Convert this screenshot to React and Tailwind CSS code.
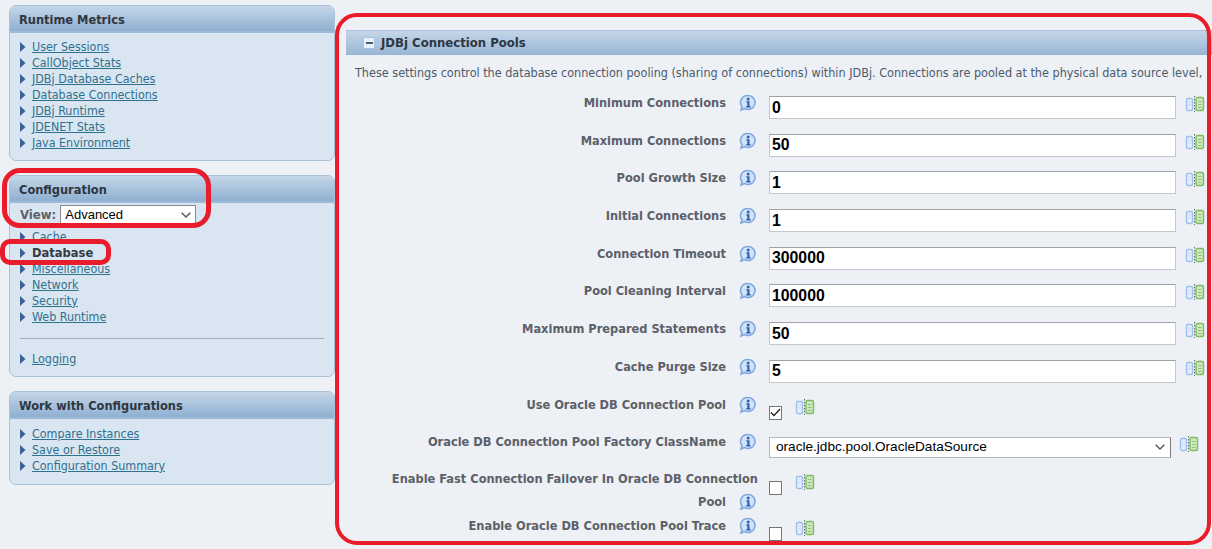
import React from 'react';

const font = { fontFamily: '"DejaVu Sans Condensed", Tahoma, "DejaVu Sans", sans-serif' };
const arial = { fontFamily: '"Liberation Sans", Arial, sans-serif' };

const InfoIcon = () => (
  <svg width="18" height="18" viewBox="0 0 18 18" className="inline-block align-middle ml-[13px] mr-[1px]">
    <path d="M9 1.5a7 7 0 1 1-3.6 13l-3.4 1.6 1-3.4A7 7 0 0 1 9 1.5z" fill="#d3e3f7" stroke="#7fa8e0" strokeWidth="1.6" />
    <circle cx="9.2" cy="5" r="1.5" fill="#2f62ad" />
    <path d="M7.2 7.3h3.3v4.8h1.1v1.3H7.2v-1.3h1.1V8.6H7.2z" fill="#2f62ad" />
  </svg>
);

const MultiIcon = () => (
  <svg width="20" height="18" viewBox="0 0 20 18" className="shrink-0">
    <rect x="1.5" y="3.5" width="6" height="12" rx="1.5" fill="#e4effb" stroke="#9dc0ea" strokeWidth="1.4" />
    <path d="M3 7h3M3 10h3" stroke="#c3d8f2" />
    <path d="M9.5 1v16" stroke="#666" strokeDasharray="1.5 1.5" />
    <rect x="11" y="2.5" width="7.5" height="13" rx="1.5" fill="#cfe8bf" stroke="#7dbb63" strokeWidth="1.4" />
    <path d="M13 6.5h3.5M13 9.5h3.5M13 12.5h3.5" stroke="#8cc474" />
  </svg>
);

const SelectBox = ({ value, className }) => (
  <div role="combobox" className={`flex items-center justify-between bg-white text-black ${className}`} style={arial}>
    <span>{value}</span>
    <svg width="10" height="6" viewBox="0 0 10 6" className="shrink-0">
      <path d="M.7.8L5 5l4.3-4.2" fill="none" stroke="#555" strokeWidth="1.4" />
    </svg>
  </div>
);

const NavItem = ({ label, active }) => (
  <li className="flex items-center h-4">
    <svg width="6" height="10" viewBox="0 0 6 10" className="ml-[10px] mr-[6px] mt-[-1px] shrink-0">
      <path d="M0 0l5.5 5L0 10z" fill="#3d6096" />
    </svg>
    {active ? (
      <span className="font-bold text-[12.8px] text-[#333a44]">{label}</span>
    ) : (
      <a href="#" className="text-[12.4px] text-[#2f7191] underline">{label}</a>
    )}
  </li>
);

const Panel = ({ title, className, children }) => (
  <section className={`rounded-[7px] border border-[#a9c1d9] bg-[#d9e5f0] overflow-hidden ${className}`}>
    <h2 className="h-[27px] flex items-center px-[9px] pt-[3px] text-[12.7px] font-bold text-[#2f3640] bg-gradient-to-b from-[#c5d6e8] to-[#8fb0d1] border-b-2 border-[#9dbbd9]">
      {title}
    </h2>
    {children}
  </section>
);

const inputRows = [
  ['Minimum Connections', '0'],
  ['Maximum Connections', '50'],
  ['Pool Growth Size', '1'],
  ['Initial Connections', '1'],
  ['Connection Timeout', '300000'],
  ['Pool Cleaning Interval', '100000'],
  ['Maximum Prepared Statements', '50'],
  ['Cache Purge Size', '5'],
];

const Label = ({ children, className = '' }) => (
  <div className={`w-[412px] shrink-0 text-right text-[12.7px] font-bold text-[#5c6068] pl-[30px] ${className}`}>
    {children}
    <InfoIcon />
  </div>
);

const CheckRow = ({ label, checked, rowClass, labelClass, boxClass }) => (
  <div className={`flex ${rowClass}`}>
    <Label className={labelClass}>{label}</Label>
    <div className={`ml-[11px] w-[13px] h-[14px] border border-[#767676] bg-white flex items-center justify-center ${boxClass}`}>
      {checked && (
        <svg width="11" height="9" viewBox="0 0 11 9">
          <path d="M1 4.5l3 3 6-6.5" fill="none" stroke="#222" strokeWidth="1.3" />
        </svg>
      )}
    </div>
    <div className="ml-[13px] mt-[8px]"><MultiIcon /></div>
  </div>
);

export default function App() {
  return (
    <div className="relative w-[1212px] h-[549px] overflow-hidden bg-[#edf1f6] flex" style={font}>
      <aside className="w-[326px] ml-[9px] pt-[5px] shrink-0 flex flex-col gap-[14px]">
        <Panel title="Runtime Metrics" className="h-[156px]">
          <ul className="pt-[6px]">
            {['User Sessions', 'CallObject Stats', 'JDBj Database Caches', 'Database Connections', 'JDBj Runtime', 'JDENET Stats', 'Java Environment'].map(item => (
              <NavItem key={item} label={item} />
            ))}
          </ul>
        </Panel>

        <Panel title="Configuration" className="h-[202px]">
          <div className="flex items-center h-[24px] pl-[10px]">
            <span className="text-[13px] font-bold text-[#5c6068] mr-[4px]">View:</span>
            <SelectBox value="Advanced" className="w-[136px] h-[20px] border border-[#8a8a8a] text-[13px] pl-[4px] pr-[4px]" />
          </div>
          <ul className="pt-[2px]">
            <NavItem label="Cache" />
            <NavItem label="Database" active />
            <NavItem label="Miscellaneous" />
            <NavItem label="Network" />
            <NavItem label="Security" />
            <NavItem label="Web Runtime" />
          </ul>
          <hr className="mx-[10px] mt-[13px] mb-[12px] border-[#a6adb5]" />
          <ul>
            <NavItem label="Logging" />
          </ul>
        </Panel>

        <Panel title="Work with Configurations" className="h-[94px]">
          <ul className="pt-[7px]">
            {['Compare Instances', 'Save or Restore', 'Configuration Summary'].map(item => (
              <NavItem key={item} label={item} />
            ))}
          </ul>
        </Panel>
      </aside>

      <main className="ml-[11px] w-[866px] shrink-0 pt-[30px]">
        <h1 className="h-[25px] flex items-center pl-[17px] text-[13px] font-bold text-[#2f3640] bg-gradient-to-b from-[#c5d6e8] to-[#97b5d4] border-t border-[#a9c1d9]">
          <span className="w-[12px] h-[12px] mr-[6px] rounded-[2px] bg-[#e8f0f9] border border-[#a9c4e2] flex items-center justify-center">
            <span className="w-[7px] h-[2px] bg-[#4a5b75]" />
          </span>
          JDBj Connection Pools
        </h1>
        <p className="h-[33px] pl-[9px] pt-[3px] flex items-center whitespace-nowrap text-[12.5px] text-[#4c5a6c]">
          These settings control the database connection pooling (sharing of connections) within JDBj. Connections are pooled at the physical data source level,
        </p>

        {inputRows.map(([label, value]) => (
          <div key={label} className="flex h-[37.7px]">
            <Label className="mt-[6px] leading-[16px]">{label}</Label>
            <input
              readOnly
              value={value}
              className="ml-[11px] mt-[8px] w-[407px] h-[23px] bg-white border border-[#c4c7cb] border-t-[#9ea3a8] pl-[2px] text-[15.8px] font-bold text-black"
              style={arial}
            />
            <div className="ml-[9px] mt-[7px]"><MultiIcon /></div>
          </div>
        ))}

        <CheckRow label="Use Oracle DB Connection Pool" checked rowClass="h-[37.4px]" labelClass="mt-[6px] leading-[16px]" boxClass="mt-[16px]" />

        <div className="flex h-[38px]">
          <Label className="mt-[6px] leading-[16px]">Oracle DB Connection Pool Factory ClassName</Label>
          <SelectBox
            value="oracle.jdbc.pool.OracleDataSource"
            className="ml-[11px] mt-[10px] w-[402px] h-[21px] border border-[#b5b8bc] border-r-[#777] pl-[6px] pr-[5px] text-[13.6px]"
          />
          <div className="ml-[8px] mt-[8px]"><MultiIcon /></div>
        </div>

        <CheckRow
          label="Enable Fast Connection Failover In Oracle DB Connection Pool"
          rowClass="h-[46px]"
          labelClass="mt-[2px] leading-[23px]"
          boxClass="mt-[16px]"
        />
        <CheckRow label="Enable Oracle DB Connection Pool Trace" rowClass="h-[38px]" labelClass="mt-[6px] leading-[16px]" boxClass="mt-[16px]" />
      </main>

      {/* red markup drawn over the screenshot */}
      <div className="absolute left-[335px] top-[13px] w-[876px] h-[532px] rounded-[22px] border-[4px] border-[#e81c2a]" />
      <div className="absolute left-[2px] top-[168px] w-[209px] h-[60px] rounded-[18px] border-[5px] border-[#e81c2a]" />
      <div className="absolute left-[0px] top-[239px] w-[111px] h-[26px] rounded-[10px] border-[5px] border-[#e81c2a]" />
    </div>
  );
}
